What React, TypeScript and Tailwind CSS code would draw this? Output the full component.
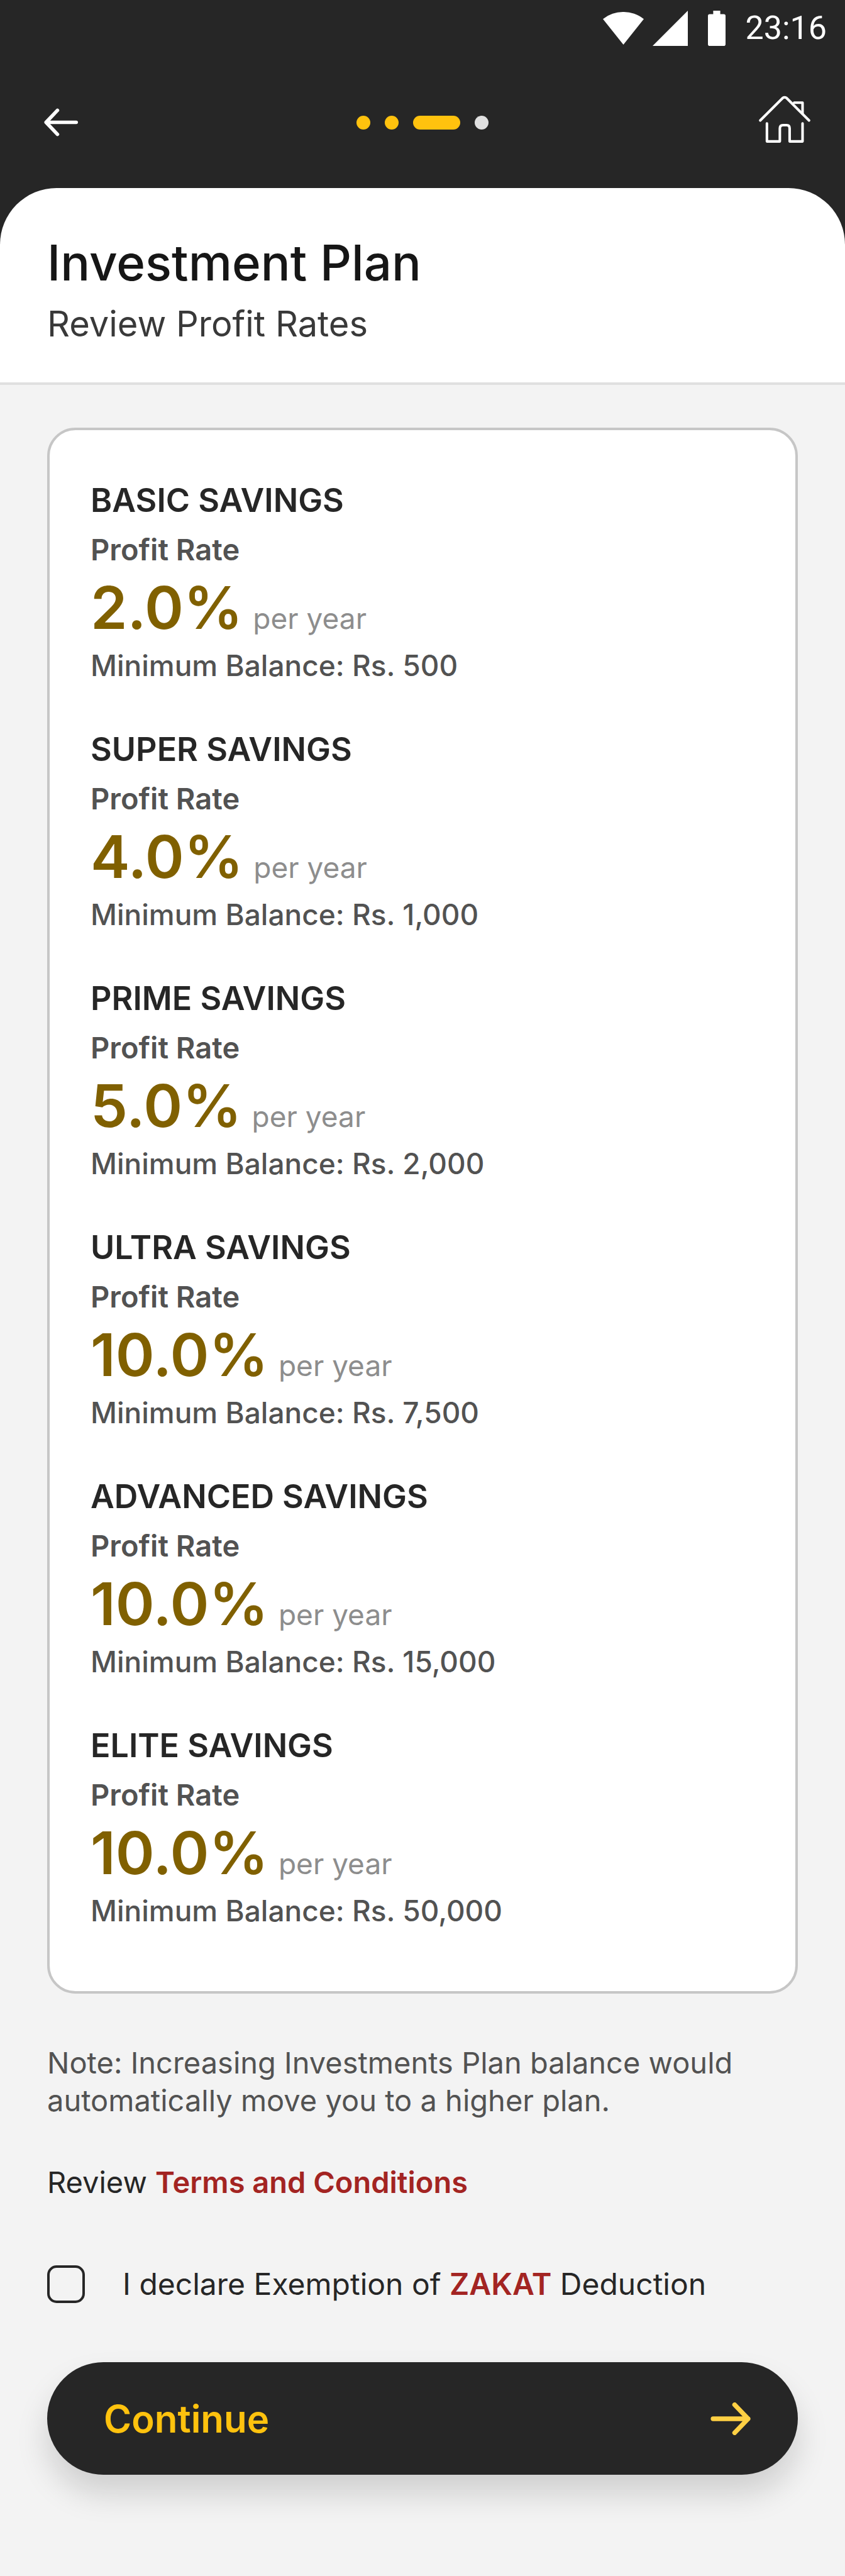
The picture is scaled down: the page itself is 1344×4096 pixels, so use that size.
import React from 'react'

const plans = [
  { id: 1, name: 'BASIC SAVINGS', rate: '2.0%', balance: '500' },
  { id: 2, name: 'SUPER SAVINGS', rate: '4.0%', balance: '1,000' },
  { id: 3, name: 'PRIME SAVINGS', rate: '5.0%', balance: '2,000' },
  { id: 4, name: 'ULTRA SAVINGS', rate: '10.0%', balance: '7,500' },
  { id: 5, name: 'ADVANCED SAVINGS', rate: '10.0%', balance: '15,000' },
  { id: 6, name: 'ELITE SAVINGS', rate: '10.0%', balance: '50,000' },
]

interface PlanProps {
  name: string
  rate: string
  balance: string
}

function StatusBar() {
  return (
    <div className="flex h-[90px] items-center justify-end pr-[29px] text-white">
      <svg className="h-[52px] w-[65px]" viewBox="0 0 70 56" fill="currentColor">
        <path d="M0 12A57 57 0 0 1 70 12L35 56Z" />
      </svg>
      <svg className="ml-[14px] size-14" viewBox="0 0 60 60" fill="currentColor">
        <path d="M60 0V60H0Z" />
      </svg>
      <svg className="ml-8 h-14 w-7" viewBox="0 0 30 60" fill="currentColor">
        <path d="M9 0H21V6H27A3 3 0 0 1 30 9V57A3 3 0 0 1 27 60H3A3 3 0 0 1 0 57V9A3 3 0 0 1 3 6H9Z" />
      </svg>
      <span className="ml-8 font-['Roboto',sans-serif] text-[52px] leading-[60px]">23:16</span>
    </div>
  )
}

function NavBar() {
  return (
    <nav className="grid h-[209px] grid-cols-3 items-center px-[55px] text-white">
      <button type="button" aria-label="Back" className="justify-self-start pl-[15px]">
        <svg className="h-[45px] w-[54px]" viewBox="0 0 58 48" fill="none" stroke="currentColor" strokeWidth="6" strokeLinecap="round" strokeLinejoin="round">
          <path d="M55 24H3.5M23 3.5L3.5 24L23 44.5" />
        </svg>
      </button>
      <div className="flex gap-[23px] justify-self-center">
        <span className="size-[22px] rounded-full bg-[#ffc20e]"></span>
        <span className="size-[22px] rounded-full bg-[#ffc20e]"></span>
        <span className="h-[22px] w-[75px] rounded-full bg-[#ffc20e]"></span>
        <span className="size-[22px] rounded-full bg-[#e0e0e0]"></span>
      </div>
      <button type="button" aria-label="Home" className="justify-self-end">
        <svg className="h-[85px] w-[82px]" viewBox="99 68 263 273" fill="none" stroke="currentColor" strokeWidth="13" strokeLinecap="round" strokeLinejoin="round">
          <path d="M106 195L221 80Q230 74 240 80L355 195" />
          <path d="M279 104H322V160" />
          <path d="M140 210V302H206V236Q206 219 222 219H241Q256 219 256 236V302H322V210" />
        </svg>
      </button>
    </nav>
  )
}

function Plan({ name, rate, balance }: PlanProps) {
  return (
    <li>
      <h2 className="text-[52px] leading-[64px] font-semibold text-[#262626]">{name}</h2>
      <p className="mt-4 text-[47px] leading-[60px] font-semibold text-[#525252]">Profit Rate</p>
      <p className="mt-1.5 flex items-baseline gap-4">
        <span className="text-[94px] leading-[112px] font-semibold text-[#806000]">{rate}</span>
        <span className="text-[46px] leading-[60px] text-[#8d8d8d]">per year</span>
      </p>
      <p className="mt-1.5 text-[46px] leading-[60px] font-medium text-[#525252]">Minimum Balance: Rs. {balance}</p>
    </li>
  )
}

function App() {
  return (
    <div className="min-h-screen bg-[#f3f3f3] font-['Inter',sans-serif]">
      <header className="bg-[#262626]">
        <StatusBar />
        <NavBar />
        <div className="rounded-t-[90px] border-b-4 border-[#e0e0e0] bg-white px-[75px] pt-[74px] pb-[61px]">
          <h1 className="text-[78px] leading-[90px] font-medium text-[#161616]">Investment Plan</h1>
          <p className="mt-5 text-[56px] leading-[64px] text-[#393939]">Review Profit Rates</p>
        </div>
      </header>

      <main className="px-[75px] pt-[68px] pb-[161px]">
        <ul className="flex flex-col gap-[72px] rounded-[45px] border-4 border-[#c6c6c6] bg-white px-[65px] pt-20 pb-[98px]">
          {plans.map((plan) => (
            <Plan key={plan.id} name={plan.name} rate={plan.rate} balance={plan.balance} />
          ))}
        </ul>

        <p className="mt-20 max-w-[1110px] text-[47px] leading-[60px] text-[#525252]">
          Note: Increasing Investments Plan balance would automatically move you to a higher plan.
        </p>
        <p className="mt-[70px] text-[47px] leading-[60px] text-[#262626]">
          Review{' '}
          <a href="#terms" className="font-semibold text-[#a32422]">
            Terms and Conditions
          </a>
        </p>

        <div className="mt-[102px] flex items-center">
          <input id="zakat" type="checkbox" className="size-[60px] shrink-0 appearance-none rounded-[15px] border-4 border-[#262626]" />
          <label htmlFor="zakat" className="pl-[60px] text-[48px] leading-[60px] text-[#262626]">
            I declare Exemption of <span className="font-semibold text-[#a32422]">ZAKAT</span> Deduction
          </label>
        </div>

        <button
          type="button"
          className="mt-[94px] flex h-[179px] w-full items-center justify-between rounded-full bg-[#262626] pr-[75px] pl-[90px] shadow-[0_30px_50px_rgba(0,0,0,0.15)]"
        >
          <span className="text-[60px] leading-[72px] font-semibold text-[#ffc20e]">Continue</span>
          <svg className="h-[52px] w-16" viewBox="90 96 204 168" fill="none" stroke="#ffd044" strokeWidth="24" strokeLinecap="round" strokeLinejoin="round">
            <path d="M102 180H282M213 108L282 180L213 252" />
          </svg>
        </button>
      </main>
    </div>
  )
}

export default App
